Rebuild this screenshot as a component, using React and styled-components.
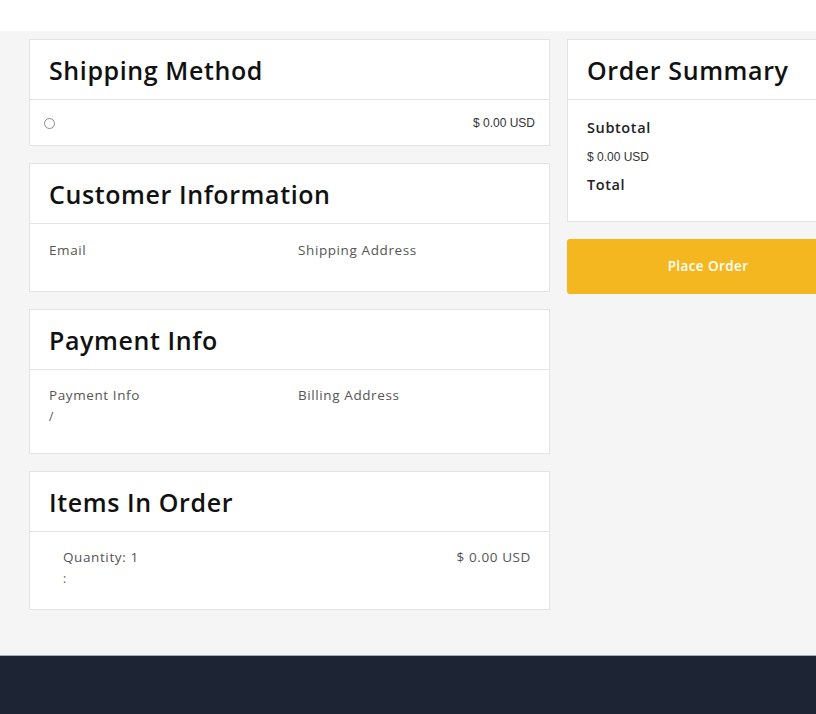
import React from "react";
import styled, { createGlobalStyle } from "styled-components";

const GlobalStyle = createGlobalStyle`
    html, body {
        margin: 0;
        padding: 0;
        overflow: hidden;
        background: #f5f5f5;
    }
    body {
        font-family: 'Open Sans', 'Liberation Sans', sans-serif;
        color: #333;
    }
`;

const Page = styled.div`
    width: 816px;
    height: 714px;
    display: flex;
    flex-direction: column;
    overflow: hidden;
`;

const TopBar = styled.header`
    height: 31px;
    background: #fff;
    flex-shrink: 0;
`;

const Main = styled.main`
    background: #f5f5f5;
    padding: 8px 0 45px 29px;
    flex-shrink: 0;
`;

const Columns = styled.div`
    display: grid;
    grid-template-columns: 521px 282px;
    gap: 17px;
    align-items: start;
`;

const Stack = styled.div`
    display: flex;
    flex-direction: column;
    gap: 17px;
`;

const Card = styled.section`
    background: #fff;
    border: 1px solid #e4e4e4;
`;

const CardHead = styled.div`
    height: 59px;
    display: flex;
    align-items: center;
    padding: 0 19px;
    border-bottom: 1px solid #e4e4e4;
    h2 {
        margin: 0;
        font-family: 'Open Sans', sans-serif;
        font-weight: 600;
        font-size: 25px;
        letter-spacing: 0.6px;
        color: #111;
    }
`;

const CardBody = styled.div`
    padding: ${props => props.pad || "18px 19px 30px"};
`;

const Row = styled.div`
    display: flex;
    justify-content: space-between;
    align-items: center;
`;

const Radio = styled.span`
    width: 9px;
    height: 9px;
    border: 1px solid #8a8a8a;
    border-radius: 50%;
    margin-left: -5px;
`;

const Price = styled.span`
    font-family: 'Liberation Sans', Arial, sans-serif;
    font-size: 12px;
    color: #333;
`;

const TwoCol = styled.div`
    display: grid;
    grid-template-columns: 249px 1fr;
`;

const Label = styled.div`
    font-size: 13.5px;
    line-height: 18px;
    letter-spacing: 0.6px;
    color: #555;
`;

const Sub = styled.div`
    font-size: 12px;
    line-height: 18px;
    color: #555;
    margin-top: 4px;
`;

const Item = styled.div`
    padding-left: 14px;
    display: flex;
    justify-content: space-between;
`;

const ItemPrice = styled.div`
    font-size: 13.5px;
    line-height: 18px;
    letter-spacing: 0.6px;
    color: #555;
`;

const SummaryLabel = styled.div`
    font-size: 14.5px;
    font-weight: 600;
    line-height: 20px;
    letter-spacing: 0.6px;
    color: #222;
`;

const SummaryPrice = styled.div`
    font-family: 'Liberation Sans', Arial, sans-serif;
    font-size: 12px;
    line-height: 16px;
    color: #333;
    margin: 11px 0 10px;
`;

const RightCol = styled.div`
    display: flex;
    flex-direction: column;
    gap: 17px;
`;

const PlaceOrder = styled.button`
    height: 55px;
    border: none;
    border-radius: 3px;
    background: #f5b71f;
    color: #fff;
    font-family: 'Open Sans', sans-serif;
    font-weight: 600;
    font-size: 13.5px;
    letter-spacing: 0.4px;
    cursor: pointer;
    padding: 0 0 2px;
`;

const Footer = styled.footer`
    flex: 1;
    background: #1d2535;
    border-top: 1px solid #a3adbd;
`;

const App = () => {
    return (
        <Page>
            <GlobalStyle />
            <TopBar />
            <Main>
                <Columns>
                    <Stack>
                        <Card>
                            <CardHead><h2>Shipping Method</h2></CardHead>
                            <CardBody pad="16px 14px 15px 19px">
                                <Row>
                                    <Radio />
                                    <Price>$ 0.00 USD</Price>
                                </Row>
                            </CardBody>
                        </Card>
                        <Card>
                            <CardHead><h2>Customer Information</h2></CardHead>
                            <CardBody pad="17px 19px 32px">
                                <TwoCol>
                                    <Label>Email</Label>
                                    <Label>Shipping Address</Label>
                                </TwoCol>
                            </CardBody>
                        </Card>
                        <Card>
                            <CardHead><h2>Payment Info</h2></CardHead>
                            <CardBody pad="16px 19px 27px">
                                <TwoCol>
                                    <div>
                                        <Label>Payment Info</Label>
                                        <Sub>/</Sub>
                                    </div>
                                    <Label>Billing Address</Label>
                                </TwoCol>
                            </CardBody>
                        </Card>
                        <Card>
                            <CardHead><h2>Items In Order</h2></CardHead>
                            <CardBody pad="16px 18px 21px 19px">
                                <Item>
                                    <div>
                                        <Label>Quantity: 1</Label>
                                        <Sub>:</Sub>
                                    </div>
                                    <ItemPrice>$ 0.00 USD</ItemPrice>
                                </Item>
                            </CardBody>
                        </Card>
                    </Stack>
                    <RightCol>
                        <Card>
                            <CardHead><h2>Order Summary</h2></CardHead>
                            <CardBody pad="18px 19px 26px">
                                <SummaryLabel>Subtotal</SummaryLabel>
                                <SummaryPrice>$ 0.00 USD</SummaryPrice>
                                <SummaryLabel>Total</SummaryLabel>
                            </CardBody>
                        </Card>
                        <PlaceOrder>Place Order</PlaceOrder>
                    </RightCol>
                </Columns>
            </Main>
            <Footer />
        </Page>
    );
};

export default App;
